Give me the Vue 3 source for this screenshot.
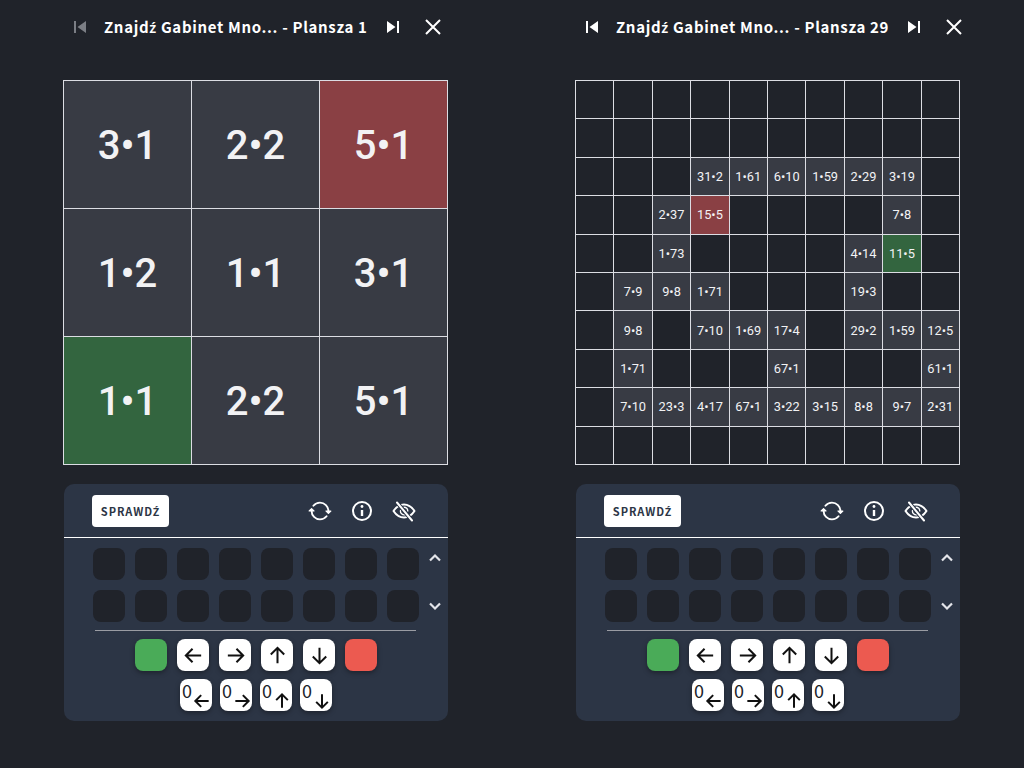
<script setup>
const L = (t, c = '') => ({ t, c })
function big() {
  return [
    L('3•1','f'),L('2•2','f'),L('5•1','r'),
    L('1•2','f'),L('1•1','f'),L('3•1','f'),
    L('1•1','g'),L('2•2','f'),L('5•1','f'),
  ]
}
const rowsData = {
  2:{3:'31•2',4:'1•61',5:'6•10',6:'1•59',7:'2•29',8:'3•19'},
  3:{2:'2•37',3:'15•5',8:'7•8'},
  4:{2:'1•73',7:'4•14',8:'11•5'},
  5:{1:'7•9',2:'9•8',3:'1•71',7:'19•3'},
  6:{1:'9•8',3:'7•10',4:'1•69',5:'17•4',7:'29•2',8:'1•59',9:'12•5'},
  7:{1:'1•71',5:'67•1',9:'61•1'},
  8:{1:'7•10',2:'23•3',3:'4•17',4:'67•1',5:'3•22',6:'3•15',7:'8•8',8:'9•7',9:'2•31'},
}
function small() {
  const out = []
  for (let r = 0; r < 10; r++) for (let c = 0; c < 10; c++) {
    const t = (rowsData[r] || {})[c] || ''
    let k = t ? 'f' : ''
    if (r === 3 && c === 3) k = 'r'
    if (r === 4 && c === 8) k = 'g'
    out.push(L(t, k))
  }
  return out
}
const boards = [
  { rest: ' Gabinet Mno... - Plansza 1', n: 3, cells: big(), first: true },
  { rest: ' Gabinet Mno... - Plansza 29', n: 10, cells: small(), first: false },
]
const arrows = {
  left: 'M20 12H4.500M11 5l-7 7 7 7',
  right: 'M4 12h15.500M13 5l7 7-7 7',
  up: 'M12 20V4.500M5 11l7-7 7 7',
  down: 'M12 4v15.500M5 13l7 7 7-7',
}
const dirs = ['left', 'right', 'up', 'down']
</script>

<template>
  <div class="page">
    <section v-for="b in boards" :key="b.rest" class="board">
      <header class="head">
        <svg class="ico prev" :class="{ off: b.first }" viewBox="0 0 24 24"><path d="M6 6h2v12H6zM9.500 12l8.500 6V6z" /></svg>
        <h1 class="title">Znajd<span class="ac">ź</span>{{ b.rest }}</h1>
        <svg class="ico next" viewBox="0 0 24 24"><path d="M6 18l8.500-6L6 6zM16 6v12h2V6z" /></svg>
        <svg class="ico close" viewBox="0 0 24 24"><path d="M5 5l14 14M19 5L5 19" /></svg>
      </header>
      <div class="grid" :class="b.n === 3 ? 'g3' : 'g10'">
        <div v-for="(c, i) in b.cells" :key="i" class="cell" :class="c.c">{{ c.t }}</div>
      </div>
      <div class="panel">
        <div class="tools">
          <button class="check">SPRAWD<span class="ac">Ź</span></button>
          <div class="tool-icons">
            <svg class="tool ion" viewBox="0 0 512 512"><path d="M434.670 285.590v-29.800c0-98.730-80.240-178.790-179.200-178.790a179 179 0 00-140.140 67.360m-38.530 82v29.800C76.800 355 157 435 256 435a180.450 180.450 0 00140-66.920" /><path class="head-fill" d="M24 256l52-52 52 52zM488 256l-52 52-52-52z" /></svg>
            <svg class="tool" viewBox="0 0 24 24"><circle cx="12" cy="12" r="9" /><path class="bar" d="M12 11v6" /><circle class="solid" cx="12" cy="7.500" r="1.400" /></svg>
            <svg class="tool" viewBox="0 0 24 24"><path d="M1.500 12C4.500 7.500 8 5.500 12 5.500s7.500 2 10.500 6.500c-3 4.500-6.500 6.500-10.500 6.500S4.500 16.500 1.500 12z" /><path class="thin" d="M8.500 11.500a3.800 3.800 0 0 0 4.500 4.300M12 8.200a3.800 3.800 0 0 1 3.800 3.800" /><path class="halo" d="M5 3.500l15 18" /><path d="M5 3.500l15 18" /></svg>
          </div>
        </div>
        <div class="slots-wrap">
          <div class="slots">
            <div v-for="n in 16" :key="n" class="slot"></div>
          </div>
          <div class="chev">
            <svg viewBox="0 0 24 24"><path d="M6 15l6-6 6 6" /></svg>
            <svg viewBox="0 0 24 24"><path d="M6 9l6 6 6-6" /></svg>
          </div>
        </div>
        <div class="sep"></div>
        <div class="keys">
          <button class="key green"></button>
          <button v-for="d in dirs" :key="d" class="key">
            <svg viewBox="0 0 24 24"><path :d="arrows[d]" /></svg>
          </button>
          <button class="key red"></button>
        </div>
        <div class="keys zero">
          <button v-for="d in dirs" :key="d" class="key zk">
            <span>0</span>
            <svg viewBox="0 0 24 24"><path :d="arrows[d]" /></svg>
          </button>
        </div>
      </div>
    </section>
  </div>
</template>

<style>
html, body { margin: 0; background: #20232a; }
</style>

<style scoped>
.page {
  width: 1024px;
  height: 768px;
  background: #20232a;
  display: flex;
  gap: 127px;
  padding-left: 64px;
  box-sizing: border-box;
  overflow: hidden;
  font-family: "Noto Sans CJK SC", sans-serif;
  color: #fff;
}
.board { width: 385px; flex: none; }
.head {
  height: 80px;
  display: flex;
  align-items: center;
  padding: 0 0 26px 4px;
  box-sizing: border-box;
  white-space: nowrap;
}
.ico { width: 24px; height: 24px; flex: none; fill: #fff; }
.prev.off { fill: #7b7e85; }
.close { fill: none; stroke: #fff; stroke-width: 2; margin-left: 16px; }
.next { margin-left: 13px; }
.title {
  margin: 0 0 0 12px;
  font-size: 15px;
  font-weight: 600;
  letter-spacing: .66px;
  line-height: 24px;
}
.ac { font-family: "Noto Sans", sans-serif; font-size: .96em; }
.grid {
  display: grid;
  gap: 1px;
  padding: 1px;
  width: 385px;
  height: 385px;
  margin-left: -1px;
  box-sizing: border-box;
  background: #dcdde3;
  font-family: Roboto, sans-serif;
}
.g3 { grid-template: repeat(3, 1fr) / repeat(3, 1fr); font-size: 40px; font-weight: 500; }
.g3 .cell { padding-top: 2px; box-sizing: border-box; }
.g10 { grid-template: repeat(10, 1fr) / repeat(10, 1fr); font-size: 12.800px; font-weight: 450; }
.cell {
  background: #20232a;
  display: flex;
  align-items: center;
  justify-content: center;
  color: #f2f2f4;
  min-width: 0;
  white-space: nowrap;
}
.cell.f { background: #383b44; }
.cell.r { background: #8a4044; }
.cell.g { background: #33653f; }
.panel {
  margin-top: 19px;
  width: 384px;
  height: 237px;
  background: #2c3545;
  border-radius: 10px;
  box-sizing: border-box;
}
.tools {
  height: 54px;
  border-bottom: 1px solid #fff;
  box-sizing: border-box;
  display: flex;
  align-items: flex-start;
  padding: 11px 0 0 28px;
}
.check {
  width: 77px;
  height: 32px;
  border: 0;
  background: #fff;
  border-radius: 4px;
  color: #2c3545;
  font: 700 11px "Noto Sans CJK SC", sans-serif;
  letter-spacing: .95px;
  padding: 0;
}
.tool-icons {
  margin-left: 139px;
  margin-top: 4px;
  display: flex;
  gap: 18px;
}
.tool { width: 24px; height: 24px; fill: none; stroke: #fff; stroke-width: 2; stroke-linecap: round; stroke-linejoin: round; }
.tool.ion { stroke-width: 40; }
.tool .head-fill { fill: #fff; stroke-width: 24; }
.tool .solid { fill: #fff; stroke: none; }
.tool .bar { stroke-width: 2.400; stroke-linecap: butt; }
.tool .thin { stroke-width: 1.400; }
.tool .halo { stroke: #2c3545; stroke-width: 4; }
.slots-wrap {
  display: flex;
  padding: 10px 0 0 29px;
}
.slots {
  display: grid;
  grid-template-columns: repeat(8, 32px);
  gap: 10px;
}
.slot { width: 32px; height: 32px; border-radius: 8px; background: #20232a; }
.chev {
  display: flex;
  flex-direction: column;
  margin-left: 5.500px;
  gap: 28px;
}
.chev svg { width: 20px; height: 20px; fill: none; stroke: #e4e5ea; stroke-width: 2.600; }
.sep { height: 1px; background: #9a9ca3; margin: 8px 32px 0 31px; }
.keys { display: flex; justify-content: center; gap: 10px; margin-top: 8px; }
.keys.zero { gap: 8px; margin-top: 8px; }
.key {
  width: 32px;
  height: 32px;
  padding: 0;
  border: 0;
  background: #fff;
  border-radius: 8px;
  box-shadow: 0 2px 5px rgba(0, 0, 0, .35);
  display: flex;
  align-items: center;
  justify-content: center;
  position: relative;
}
.key svg { width: 23px; height: 23px; fill: none; stroke: #111; stroke-width: 2.100; }
.green { background: #4aab58; }
.red { background: #ec5a50; }
.zk svg { position: absolute; right: 0; bottom: 0; width: 20px; height: 20px; stroke-width: 2.400; }
.zk span {
  position: absolute;
  left: 2px;
  top: 0;
  font: 400 18px/22px "Noto Sans CJK SC", sans-serif;
  color: #20232a;
}
</style>
